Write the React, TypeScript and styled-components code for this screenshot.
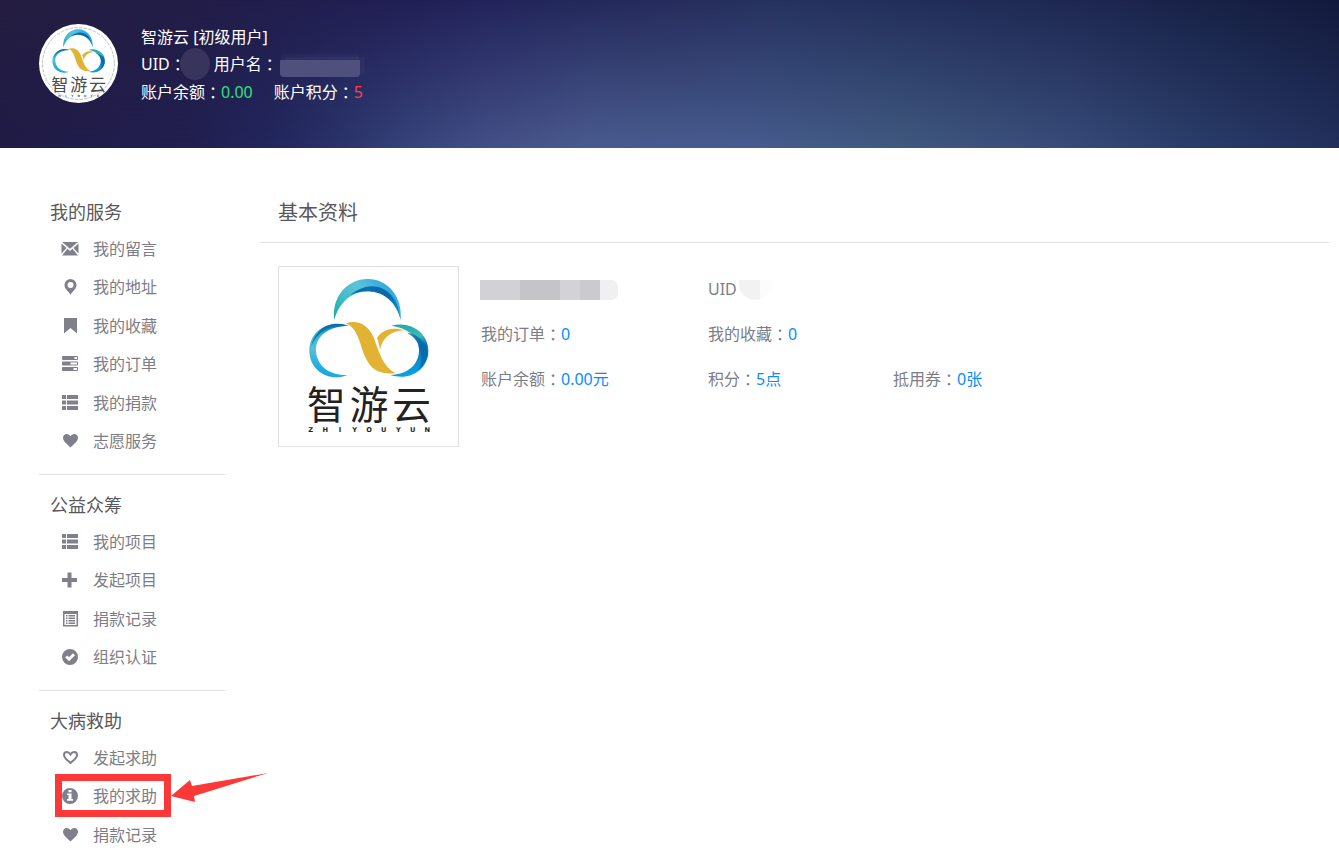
import React from "react";
import styled, { createGlobalStyle } from "styled-components";

const GlobalStyle = createGlobalStyle`
  * { box-sizing: border-box; }
  body {
    margin: 0;
    background: #fff;
    color: #7d7d86;
    font: 16px/24px "Noto Sans", "Noto Sans CJK SC", sans-serif;
  }
`;

const Banner = styled.header`
  position: relative;
  isolation: isolate;
  display: flex;
  align-items: flex-start;
  gap: 23px;
  min-height: 148px;
  padding: 24px 39px;
  color: #fff;
  background: linear-gradient(90deg, #251d41 0%, #221d48 15%, #211f55 30%, #22245a 37%, #262d5c 50%, #26325f 58%, #222f5b 67%, #1e2852 80%, #182247 90%, #131a3c 100%);

  &::before {
    content: "";
    position: absolute;
    inset: 0;
    z-index: -1;
    background: linear-gradient(90deg, #1f1b45 0%, #211f50 14%, #22265c 20%, #293369 25%, #35427a 30%, #434f87 36%, #4a5b8f 44%, #465c8e 56%, #40597f 67%, #374b78 80%, #293c68 90%, #22305c 100%);
    mask-image: linear-gradient(to top, #000, transparent);
  }
`;

const Avatar = styled.div`
  flex: none;
  width: 79px;
  height: 79px;
  overflow: hidden;
  border-radius: 50%;
  background: #fff;
`;

const UserLines = styled.div`
  line-height: 27px;
`;

const UserLine = styled.div`
  display: flex;
  align-items: center;
  height: 27px;

  &:last-child {
    height: 29px;
  }
`;

const ColonMark = styled.span`
  margin-bottom: 1px;
  font-family: "Noto Sans CJK TC", sans-serif;
  line-height: 1;
`;

const Amount = styled.span<{ $tone: string }>`
  color: ${(p) => p.$tone};
`;

const Points = styled.span`
  margin-left: 21px;
`;

const HiddenId = styled.span`
  width: 30px;
  height: 32px;
  margin: 0 4px 2px -6px;
  border-radius: 50%;
  background: rgba(255, 255, 255, 0.1);
`;

const HiddenName = styled.span`
  width: 80px;
  height: 17px;
  margin: 8px 0 0 2px;
  border-radius: 0 0 4px 4px;
  background: #50507e;
  box-shadow: 0 -7px 0 -1px rgba(255, 255, 255, 0.03), 5px -3px 0 rgba(255, 255, 255, 0.03);
`;

const Content = styled.div`
  display: flex;
  align-items: flex-start;
  gap: 34px;
  padding: 48px 9px 0 39px;
`;

const Sidebar = styled.nav`
  flex: none;
  width: 187px;
`;

const Group = styled.section`
  padding-bottom: 13px;

  & + & {
    padding-top: 14px;
    border-top: 1px solid #e3e3e5;
  }
`;

const GroupTitle = styled.h2`
  margin: 0;
  padding: 0 0 2px 11px;
  color: #58585c;
  font-size: 18px;
  font-weight: 400;
  line-height: 32px;
`;

const Menu = styled.ul`
  margin: 0;
  padding: 0;
  list-style: none;
`;

const MenuItem = styled.li`
  position: relative;

  &:nth-child(even) {
    padding-bottom: 1px;
  }
`;

const MenuLink = styled.a`
  display: flex;
  align-items: center;
  gap: 14px;
  height: 38px;
  padding-left: 22px;
  color: #7d7d86;
  text-decoration: none;
`;

const MenuIcon = styled.svg`
  flex: none;
  width: 18px;
  height: 18px;
  margin-bottom: 1px;
  fill: #80808c;
`;

const Marker = styled.span`
  position: absolute;
  top: -3px;
  left: 16px;
  width: 116px;
  height: 43px;
  border: 7px solid #fc3838;
  pointer-events: none;
`;

const Arrow = styled.svg`
  position: absolute;
  top: -4px;
  left: 132px;
  width: 98px;
  height: 30px;
  fill: #fc3838;
  pointer-events: none;
`;

const Main = styled.main`
  flex: 1;
  min-width: 0;
`;

const PageTitle = styled.h1`
  margin: 0;
  padding: 0 18px 13px;
  border-bottom: 1px solid #e3e3e5;
  color: #58585c;
  font-size: 20px;
  font-weight: 400;
  line-height: 33px;
`;

const Profile = styled.div`
  display: flex;
  gap: 22px;
  padding: 23px 18px;
`;

const Photo = styled.div`
  flex: none;
  width: 181px;
  height: 181px;
  border: 1px solid #e0e0e0;
`;

const Facts = styled.div`
  display: grid;
  flex: 1;
  grid-template-columns: 227px 185px 1fr;
  grid-auto-rows: 45px;
  padding-top: 1px;
  line-height: 45px;
`;

const Fact = styled.div<{ $column?: number }>`
  display: flex;
  align-items: center;
  grid-column: ${(p) => p.$column ?? "auto"};
  white-space: nowrap;
`;

const HiddenTitle = styled.span`
  width: 138px;
  height: 20px;
  margin-left: -1px;
  border-radius: 0 7px 7px 0;
  background: linear-gradient(90deg, #d2d2d4 40px, #c4c4c9 40px 80px, #d3d3d6 80px 100px, #cbcbce 100px 120px, #f0f0f3 120px);
`;

const HiddenUid = styled.span`
  width: 32px;
  height: 20px;
  margin-left: 2px;
  border-radius: 0 0 16px 16px;
  background: linear-gradient(90deg, #f2f2f3 21px, #fcfcfc 21px);
`;

const LogoSvg = styled.svg`
  display: block;
  width: 100%;
  height: 100%;
`;

function Logo({ id, ring }: { id: string; ring?: boolean }) {
  const ink = ring ? "#4c4c4c" : "#222";
  return (
    <LogoSvg viewBox="27 21 537 537" role="img" aria-label="智游云">
      <defs>
        <linearGradient id={`${id}-top`} x1="0" y1="1" x2="1" y2="0.4">
          <stop offset="0" stopColor="#18a9a2" />
          <stop offset="0.35" stopColor="#45bdc8" />
          <stop offset="0.65" stopColor="#5cc2dc" />
          <stop offset="1" stopColor="#2aa5dc" />
        </linearGradient>
        <linearGradient id={`${id}-deep`} x1="0" y1="0" x2="1" y2="1">
          <stop offset="0" stopColor="#0b72b5" />
          <stop offset="0.5" stopColor="#0668ae" />
          <stop offset="1" stopColor="#0b9bdc" />
        </linearGradient>
        <linearGradient id={`${id}-left`} x1="0.7" y1="0" x2="0.4" y2="1">
          <stop offset="0" stopColor="#0b6fb0" />
          <stop offset="0.3" stopColor="#36b2ca" />
          <stop offset="0.6" stopColor="#58c0d8" />
          <stop offset="1" stopColor="#0ba3e0" />
        </linearGradient>
        <linearGradient id={`${id}-right`} x1="0.3" y1="0" x2="0.5" y2="1">
          <stop offset="0" stopColor="#1fa9a4" />
          <stop offset="0.3" stopColor="#3dbab8" />
          <stop offset="0.5" stopColor="#0b6fb3" />
          <stop offset="1" stopColor="#08a6e6" />
        </linearGradient>
      </defs>
      {ring && <circle cx="295" cy="290" r="244" fill="none" stroke="#a6a9b4" strokeWidth="5" strokeDasharray="24 8" />}
      <path fill={`url(#${id}-top)`} d="M193 180C184 112 231 57 293 57C354 57 399 112 392 180C382 127 342 94 294 94C246 94 207 128 193 180Z" />
      <path fill={`url(#${id}-deep)`} d="M241 106C306 50 384 84 392 180C380 127 340 94 294 94C274 94 256 98 241 106Z" />
      <path fill={`url(#${id}-left)`} d="M236 198C172 176 118 216 118 272C118 330 176 368 233 345C180 348 141 318 138 273C135 229 176 198 236 198Z" />
      <path fill="#0b70b2" d="M236 198C181 190 140 217 124 258C132 224 158 198 186 193C204 190 221 192 236 198Z" />
      <path fill={`url(#${id}-right)`} d="M363 197C424 181 475 220 475 272C475 328 421 364 361 345C413 344 447 314 447 271C447 232 415 204 363 197Z" />
      <path fill="#0867aa" d="M411 218C442 222 468 244 474 282C470 304 459 320 441 331C455 314 458 294 451 269C446 247 433 231 411 218Z" opacity="0.8" />
      <path fill="#e2b233" d="M227 190C264 178 296 195 312 235C327 276 338 319 376 340C329 344 301 329 284 287C268 248 263 204 227 190Z" />
      <path fill="#e2b233" d="M321 234C337 207 371 200 403 211C365 212 337 232 330 270C328 254 325 244 321 234Z" />
      <text x="169 297 425" y="476" textAnchor="middle" fill={ink} fontSize="116" fontFamily="'Noto Sans CJK SC', sans-serif">
        智游云
      </text>
      <text x="122 166 210 254 297 341 385 428 472" y="517" textAnchor="middle" fill={ink} fontSize="20" fontWeight="700" fontFamily="'DejaVu Sans', sans-serif">
        ZHIYOUYUN
      </text>
    </LogoSvg>
  );
}

const listIcon = <path d="M1 1h4v4H1zM6 1h11v4H6zM1 6.500h4v4H1zM6 6.500h11v4H6zM1 12h4v4H1zM6 12h11v4H6z" />;
const heartIcon = <path d="M9.500 15.500C6 12 2 9.500 2 5.800 2 3.300 3.800 2 5.700 2 7.500 2 8.800 3 9.500 4.300 10.200 3 11.500 2 13.300 2 15.200 2 17 3.300 17 5.800 17 9.500 13 12 9.500 15.500Z" />;

const icons: Record<string, React.ReactNode> = {
  mail: <path d="M1 2h16L9 8.800zM.500 3.600 5.600 8 .500 13.400zM17.500 3.600v9.800L12.400 8zM1 15.500 6.500 8.800 9 11l2.500-2.200L17 15.500z" />,
  pin: <path fillRule="evenodd" d="M9.500 1a6 6 0 0 0-6 6c0 3.500 3.500 6 6 9.700 2.500-3.700 6-6.200 6-9.700a6 6 0 0 0-6-6Zm0 3a3 3 0 1 1 0 6 3 3 0 0 1 0-6Z" />,
  bookmark: <path d="M3 1h13v15.500L9.500 11 3 16.500z" />,
  tasks: <path fillRule="evenodd" d="M2 1h14a1 1 0 0 1 1 1v2a1 1 0 0 1-1 1H2a1 1 0 0 1-1-1V2a1 1 0 0 1 1-1Zm11.500 1v2H16V2zM2 6.500h14a1 1 0 0 1 1 1v2a1 1 0 0 1-1 1H2a1 1 0 0 1-1-1v-2a1 1 0 0 1 1-1Zm7.500 1v2H16v-2zM2 12h14a1 1 0 0 1 1 1v2a1 1 0 0 1-1 1H2a1 1 0 0 1-1-1v-2a1 1 0 0 1 1-1Zm10.500 1v2H16v-2z" />,
  list: listIcon,
  heart: heartIcon,
  plus: <path d="M6.500 1.500h4v5.500H16v4h-5.500v5.500h-4V11H1V7h5.500z" />,
  sheet: <path fillRule="evenodd" d="M2 1h15v15.500H2zM3.500 4v11h12V4zM5 5h1.500v1.500H5zM7.500 5H14v1.500H7.500zM5 7.500h1.500V9H5zM7.500 7.500H14V9H7.500zM5 10h1.500v1.500H5zM7.500 10H14v1.500H7.500zM5 12.500h1.500V14H5zM7.500 12.500H14V14H7.500z" />,
  check: <path fillRule="evenodd" d="M9 1a8 8 0 1 1 0 16A8 8 0 0 1 9 1ZM4.200 9.300l3.800 4 6-6L12 5.300 8 9.200 6.200 7.400z" />,
  heartOutline: <path fill="none" stroke="#80808c" strokeWidth="2" d="M9.500 14C6.500 11.200 3 9 3 5.900 3 4 4.300 3 5.900 3c1.700 0 2.900 1.200 3.600 2.400C10.200 4.200 11.400 3 13.100 3 14.700 3 16 4 16 5.900 16 9 12.500 11.200 9.500 14Z" />,
  info: <path fillRule="evenodd" d="M9 1a8 8 0 1 1 0 16A8 8 0 0 1 9 1ZM7.500 3v2.300h3V3zM6 6.500V8h1.500v4H6v1.700h6V12h-1.500V6.500z" />,
};

type Entry = { label: string; icon: string; marked?: boolean };

const groups: { title: string; entries: Entry[] }[] = [
  {
    title: "我的服务",
    entries: [
      { label: "我的留言", icon: "mail" },
      { label: "我的地址", icon: "pin" },
      { label: "我的收藏", icon: "bookmark" },
      { label: "我的订单", icon: "tasks" },
      { label: "我的捐款", icon: "list" },
      { label: "志愿服务", icon: "heart" },
    ],
  },
  {
    title: "公益众筹",
    entries: [
      { label: "我的项目", icon: "list" },
      { label: "发起项目", icon: "plus" },
      { label: "捐款记录", icon: "sheet" },
      { label: "组织认证", icon: "check" },
    ],
  },
  {
    title: "大病救助",
    entries: [
      { label: "发起求助", icon: "heartOutline" },
      { label: "我的求助", icon: "info", marked: true },
      { label: "捐款记录", icon: "heart" },
    ],
  },
];

const Colon = () => <ColonMark>：</ColonMark>;
const BLUE = "#0a8cff";

export default function App() {
  return (
    <>
      <GlobalStyle />
      <Banner>
        <Avatar>
          <Logo id="avatar" ring />
        </Avatar>
        <UserLines>
          <UserLine>智游云 [初级用户]</UserLine>
          <UserLine>
            UID
            <Colon />
            <HiddenId />
            用户名
            <Colon />
            <HiddenName />
          </UserLine>
          <UserLine>
            账户余额
            <Colon />
            <Amount $tone="#2fe07c">0.00</Amount>
            <Points>账户积分</Points>
            <Colon />
            <Amount $tone="#ff3f46">5</Amount>
          </UserLine>
        </UserLines>
      </Banner>
      <Content>
        <Sidebar>
          {groups.map((group) => (
            <Group key={group.title}>
              <GroupTitle>{group.title}</GroupTitle>
              <Menu>
                {group.entries.map((entry) => (
                  <MenuItem key={entry.label}>
                    <MenuLink href="#">
                      <MenuIcon viewBox="0 0 18 18" aria-hidden="true">
                        {icons[entry.icon]}
                      </MenuIcon>
                      {entry.label}
                    </MenuLink>
                    {entry.marked && (
                      <>
                        <Marker />
                        <Arrow viewBox="0 0 98 30" aria-hidden="true">
                          <path d="M0 23 19 7 21 13 97 0 23 23 24 29Z" />
                        </Arrow>
                      </>
                    )}
                  </MenuItem>
                ))}
              </Menu>
            </Group>
          ))}
        </Sidebar>
        <Main>
          <PageTitle>基本资料</PageTitle>
          <Profile>
            <Photo>
              <Logo id="photo" />
            </Photo>
            <Facts>
              <Fact>
                <HiddenTitle />
              </Fact>
              <Fact>
                UID
                <HiddenUid />
              </Fact>
              <Fact $column={1}>
                我的订单
                <Colon />
                <Amount $tone={BLUE}>0</Amount>
              </Fact>
              <Fact>
                我的收藏
                <Colon />
                <Amount $tone={BLUE}>0</Amount>
              </Fact>
              <Fact $column={1}>
                账户余额
                <Colon />
                <Amount $tone={BLUE}>0.00元</Amount>
              </Fact>
              <Fact>
                积分
                <Colon />
                <Amount $tone={BLUE}>5点</Amount>
              </Fact>
              <Fact>
                抵用券
                <Colon />
                <Amount $tone={BLUE}>0张</Amount>
              </Fact>
            </Facts>
          </Profile>
        </Main>
      </Content>
    </>
  );
}
